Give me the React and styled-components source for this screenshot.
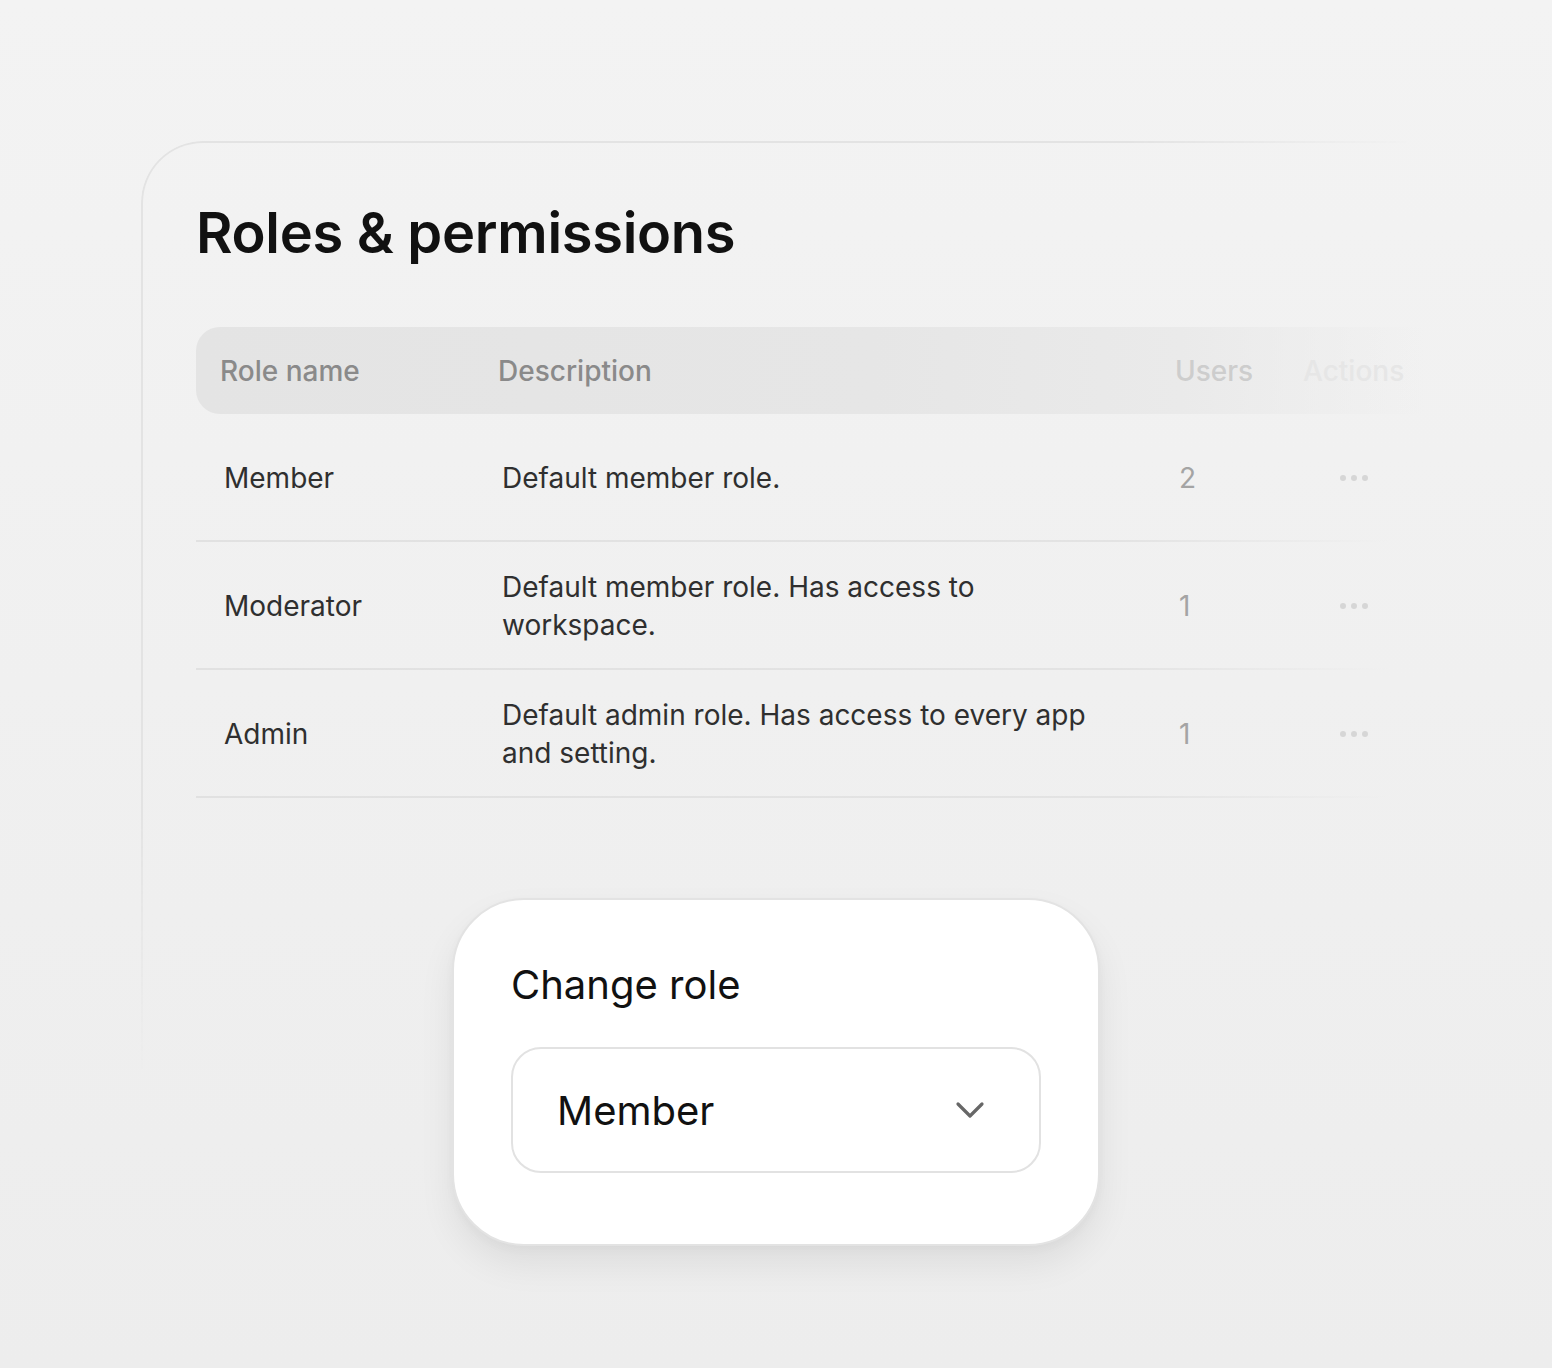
import React from "react";
import styled, { createGlobalStyle } from "styled-components";

const GlobalStyle = createGlobalStyle`
    html, body {
        margin: 0;
        padding: 0;
    }
    body {
        font-family: Inter, "Noto Sans", "Liberation Sans", sans-serif;
        background: linear-gradient(180deg, #f3f3f3 0%, #f0f0f0 50%, #ededed 100%);
        min-height: 1368px;
        overflow: hidden;
    }
`;

const Page = styled.div`
    width: 1552px;
    height: 1368px;
    padding: 141px 0 0 141px;
    box-sizing: border-box;
    overflow: hidden;
`;

const Card = styled.section`
    position: relative;
    width: 1411px;
    height: 1227px;
    box-sizing: border-box;
    padding: 57px 0 0 55px;
    border-radius: 62px 0 0 0;

    &::before {
        content: "";
        position: absolute;
        inset: 0;
        border-top: 2px solid #e3e3e3;
        border-left: 2px solid #e3e3e3;
        border-radius: 62px 0 0 0;
        pointer-events: none;
        -webkit-mask-image: linear-gradient(90deg, #000 70%, transparent 90%),
            linear-gradient(180deg, #000 55%, transparent 76%);
        -webkit-mask-composite: source-in;
        mask-image: linear-gradient(90deg, #000 70%, transparent 90%),
            linear-gradient(180deg, #000 55%, transparent 76%);
        mask-composite: intersect;
    }
`;

const Title = styled.h1`
    margin: 0 0 59px;
    font-size: 56px;
    line-height: 70px;
    font-weight: 600;
    color: #111;
    letter-spacing: -0.3px;
`;

const Table = styled.div`
    width: 1230px;
    display: flex;
    flex-direction: column;
`;

const columns = "278px 677px 128px 1fr";

const HeadRow = styled.div`
    display: grid;
    grid-template-columns: ${columns};
    align-items: center;
    height: 87px;
    padding-left: 24px;
    border-radius: 24px 0 0 24px;
    background: linear-gradient(90deg, #e4e4e4 0%, #e6e6e6 55%, #eaeaea 80%, rgba(238, 238, 238, 0) 100%);
`;

const HeadCell = styled.div`
    font-size: 28px;
    font-weight: 500;
    color: ${(p) => p.$tone || "#8a8a8a"};
`;

const Row = styled.div`
    display: grid;
    grid-template-columns: ${columns};
    align-items: center;
    height: 128px;
    padding-left: 28px;
    box-sizing: border-box;
    background: linear-gradient(90deg, #e1e1e1 0%, #e3e3e3 75%, rgba(230, 230, 230, 0) 97%) left bottom / 100% 2px no-repeat;
`;

const NameCell = styled.div`
    font-size: 28px;
    color: #2f2f2f;
`;

const DescCell = styled.div`
    max-width: 590px;
    font-size: 28px;
    line-height: 38px;
    color: #2f2f2f;
`;

const CountCell = styled.div`
    font-size: 28px;
    color: #a4a4a4;
`;

const ActionCell = styled.div`
    display: flex;
    justify-content: center;
    padding-right: 26px;
`;

const Dots = styled.svg`
    width: 30px;
    height: 8px;
    display: block;
`;

const Dialog = styled.div`
    position: absolute;
    left: 311px;
    top: 757px;
    width: 648px;
    height: 348px;
    box-sizing: border-box;
    padding: 58px 57px 0;
    background: #fff;
    border: 2px solid #e3e3e3;
    border-radius: 72px;
    box-shadow: 0 18px 36px rgba(0, 0, 0, 0.07), 0 4px 10px rgba(0, 0, 0, 0.03);
`;

const DialogTitle = styled.h2`
    margin: 0 0 35px;
    font-size: 40px;
    line-height: 54px;
    font-weight: 400;
    color: #111;
`;

const Select = styled.div`
    display: flex;
    align-items: center;
    justify-content: space-between;
    height: 126px;
    box-sizing: border-box;
    padding: 0 54px 0 44px;
    border: 2px solid #e2e2e2;
    border-radius: 30px;
`;

const SelectValue = styled.span`
    font-size: 40px;
    color: #111;
`;

const Chevron = styled.svg`
    width: 30px;
    height: 18px;
    display: block;
`;

const roles = [
    { name: "Member", desc: "Default member role.", users: 2 },
    { name: "Moderator", desc: "Default member role. Has access to workspace.", users: 1 },
    { name: "Admin", desc: "Default admin role. Has access to every app and setting.", users: 1 },
];

const MoreDots = () => (
    <Dots viewBox="0 0 30 8">
        <circle cx="4" cy="4" r="3" fill="#d6d6d6" />
        <circle cx="15" cy="4" r="3" fill="#d6d6d6" />
        <circle cx="26" cy="4" r="3" fill="#d6d6d6" />
    </Dots>
);

const App = () => {
    return (
        <>
            <GlobalStyle />
            <Page>
                <Card>
                    <Title>Roles &amp; permissions</Title>
                    <Table>
                        <HeadRow>
                            <HeadCell>Role name</HeadCell>
                            <HeadCell>Description</HeadCell>
                            <HeadCell $tone="#cdcdcd">Users</HeadCell>
                            <HeadCell $tone="#e6e6e6">Actions</HeadCell>
                        </HeadRow>
                        {roles.map((r) => (
                            <Row key={r.name}>
                                <NameCell>{r.name}</NameCell>
                                <DescCell>{r.desc}</DescCell>
                                <CountCell>{r.users}</CountCell>
                                <ActionCell>
                                    <MoreDots />
                                </ActionCell>
                            </Row>
                        ))}
                    </Table>

                    <Dialog>
                        <DialogTitle>Change role</DialogTitle>
                        <Select>
                            <SelectValue>Member</SelectValue>
                            <Chevron viewBox="0 0 30 18">
                                <path d="M3 3 L15 15 L27 3" fill="none" stroke="#676767" strokeWidth="3.2" strokeLinecap="round" strokeLinejoin="round" />
                            </Chevron>
                        </Select>
                    </Dialog>
                </Card>
            </Page>
        </>
    );
};

export default App;
